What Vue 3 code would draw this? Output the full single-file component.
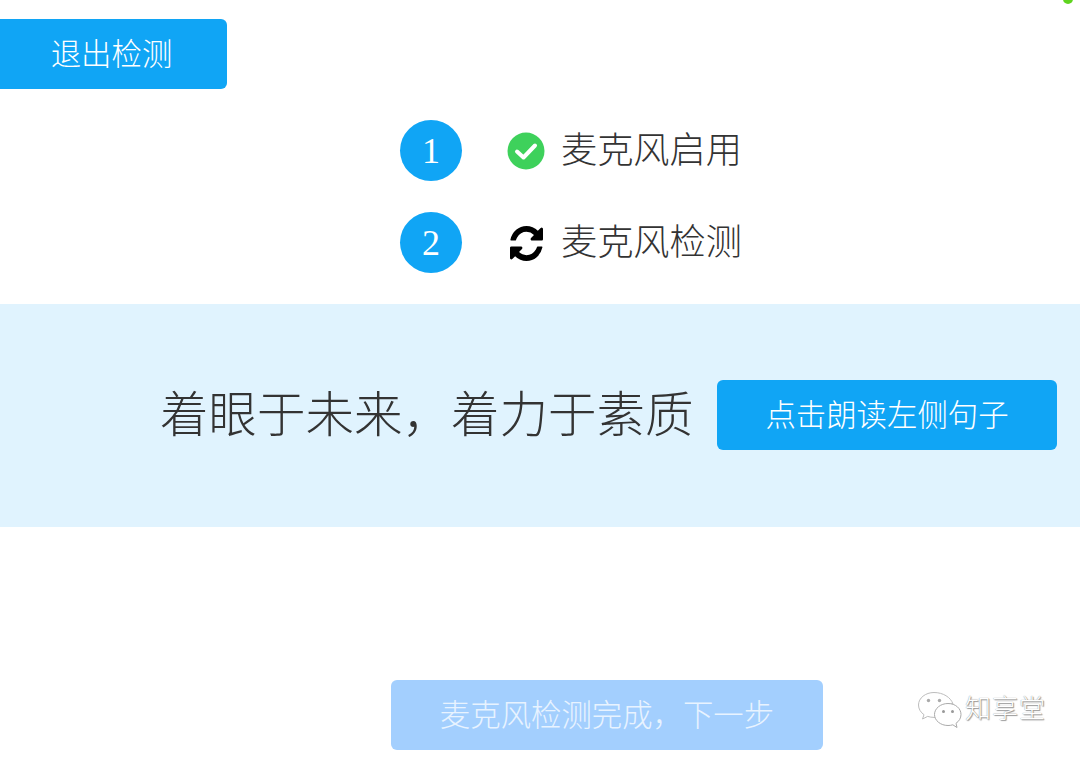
<script setup>
const steps = [
  { n: 1, label: '麦克风启用', icon: 'check' },
  { n: 2, label: '麦克风检测', icon: 'sync' }
]
</script>

<template>
  <div class="page">
    <span class="dot"></span>
    <button class="btn exit">退出检测</button>
    <div class="steps">
      <div v-for="s in steps" :key="s.n" class="step">
        <span class="num">{{ s.n }}</span>
        <span class="icon">
          <svg v-if="s.icon === 'check'" width="38" height="38" viewBox="0 0 38 38">
            <circle cx="19" cy="19" r="18.5" fill="#3ed15b" />
            <path d="M10 19.500l6.500 6L28 13.500" fill="none" stroke="#fff" stroke-width="4" stroke-linecap="round" stroke-linejoin="round" />
          </svg>
          <svg v-else class="sync" width="33" height="35" viewBox="0 0 1536 1536" preserveAspectRatio="none">
            <path d="M1511 928q0 5-1 7-64 268-268 434.5t-478 166.5q-146 0-282.5-55t-243.5-157l-129 129q-19 19-45 19t-45-19-19-45v-448q0-26 19-45t45-19h448q26 0 45 19t19 45-19 45l-137 137q71 66 161 102t187 36q134 0 250-65t186-179q11-17 53-117 8-23 30-23h192q13 0 22.5 9.5t9.5 22.5zm25-800v448q0 26-19 45t-45 19h-448q-26 0-45-19t-19-45 19-45l138-138q-148-137-349-137-134 0-250 65t-186 179q-11 17-53 117-8 23-30 23h-199q-13 0-22.5-9.5t-9.5-22.5v-7q65-268 270-434.5t480-166.5q146 0 284 55.5t245 156.5l130-129q19-19 45-19t45 19 19 45z" fill="#000" />
          </svg>
        </span>
        <span class="label">{{ s.label }}</span>
      </div>
    </div>
    <div class="band">
      <span class="sentence">着眼于未来&#xFF0C;着力于素质</span>
      <button class="btn read">点击朗读左侧句子</button>
    </div>
    <button class="btn next">麦克风检测完成&#xFF0C;下一步</button>
    <div class="mark">
      <svg width="46" height="38" viewBox="0 0 46 38">
        <path d="M17 1.500C8.500 1.500 1.500 7 1.500 14c0 4 2.300 7.500 5.500 9.700L5.500 28l5.200-2.600c2 .6 4 1 6.300 1 .8 0 1.500 0 2.200-.1C26 24 22 12 36 13 33.800 6.300 26 1.500 17 1.500z" fill="#fff" stroke="#bdbdbd" stroke-width="1" />
        <path d="M31 12.500c-7.500 0-13.500 5-13.500 11s6 11 13.500 11c1.700 0 3.300-.2 4.800-.7l4.200 2.700-1-4.200c3-2 5-5.200 5-8.800 0-6-5.500-11-13-11z" fill="#fff" stroke="#aaa" stroke-width="1" />
        <circle cx="11.500" cy="9.500" r="1.700" fill="#aaa" />
        <circle cx="22.500" cy="9.500" r="1.700" fill="#aaa" />
        <circle cx="26.500" cy="20.500" r="1.500" fill="#999" />
        <circle cx="35.500" cy="20.500" r="1.500" fill="#999" />
      </svg>
      <span class="mark-text">知享堂</span>
    </div>
  </div>
</template>

<style scoped>
.page {
  position: relative;
  height: 759px;
  overflow: hidden;
  background: #fff;
  padding-top: 19px;
  box-sizing: border-box;
  font-family: "Liberation Serif", "Noto Sans CJK SC", serif;
  font-weight: 300;
  color: #333;
}
.dot {
  position: absolute;
  top: -6px;
  left: 1063px;
  width: 10px;
  height: 10px;
  border-radius: 50%;
  background: #5fd41f;
}
.btn {
  display: flex;
  align-items: center;
  justify-content: center;
  box-sizing: border-box;
  height: 70px;
  padding: 0 0 5px;
  border: 0;
  border-radius: 6px;
  background: #10a5f5;
  color: #fff;
  font: inherit;
  font-size: 30.400px;
}
.exit {
  width: 227px;
  padding-right: 4px;
  border-radius: 0 6px 6px 0;
}
.steps {
  display: flex;
  flex-direction: column;
  gap: 31px;
  margin: 31px 0 0 400px;
}
.step {
  display: flex;
  align-items: center;
  height: 61px;
}
.num {
  display: flex;
  align-items: center;
  justify-content: center;
  width: 62px;
  height: 61px;
  border-radius: 50%;
  background: #10a5f5;
  color: #fff;
  font-size: 36px;
}
.icon {
  display: flex;
  align-items: center;
  justify-content: center;
  width: 38px;
  height: 38px;
  margin: 0 16px 0 45px;
}
.sync {
  margin-top: 1px;
}
.label {
  padding-top: 2px;
  font-size: 36.200px;
  line-height: 59px;
}
.band {
  display: flex;
  align-items: flex-start;
  box-sizing: border-box;
  height: 223px;
  margin-top: 31px;
  padding: 76px 0 0 160px;
  background: #e0f3fe;
}
.sentence {
  width: 533px;
  height: 70px;
  font-size: 48.500px;
  line-height: 72px;
  white-space: nowrap;
}
.read {
  width: 340px;
  margin-left: 24px;
}
.next {
  width: 432px;
  margin: 153px 0 0 391px;
  background: #a3cffe;
  color: #e8f3ff;
}
.mark {
  position: absolute;
  left: 917px;
  top: 691px;
  display: flex;
  align-items: center;
  gap: 2px;
}
.mark-text {
  font-size: 26px;
  line-height: 38px;
  letter-spacing: 1px;
  color: #fff;
  text-shadow: 0 0 1px #777, 1px 1px 1px #999;
}
</style>
